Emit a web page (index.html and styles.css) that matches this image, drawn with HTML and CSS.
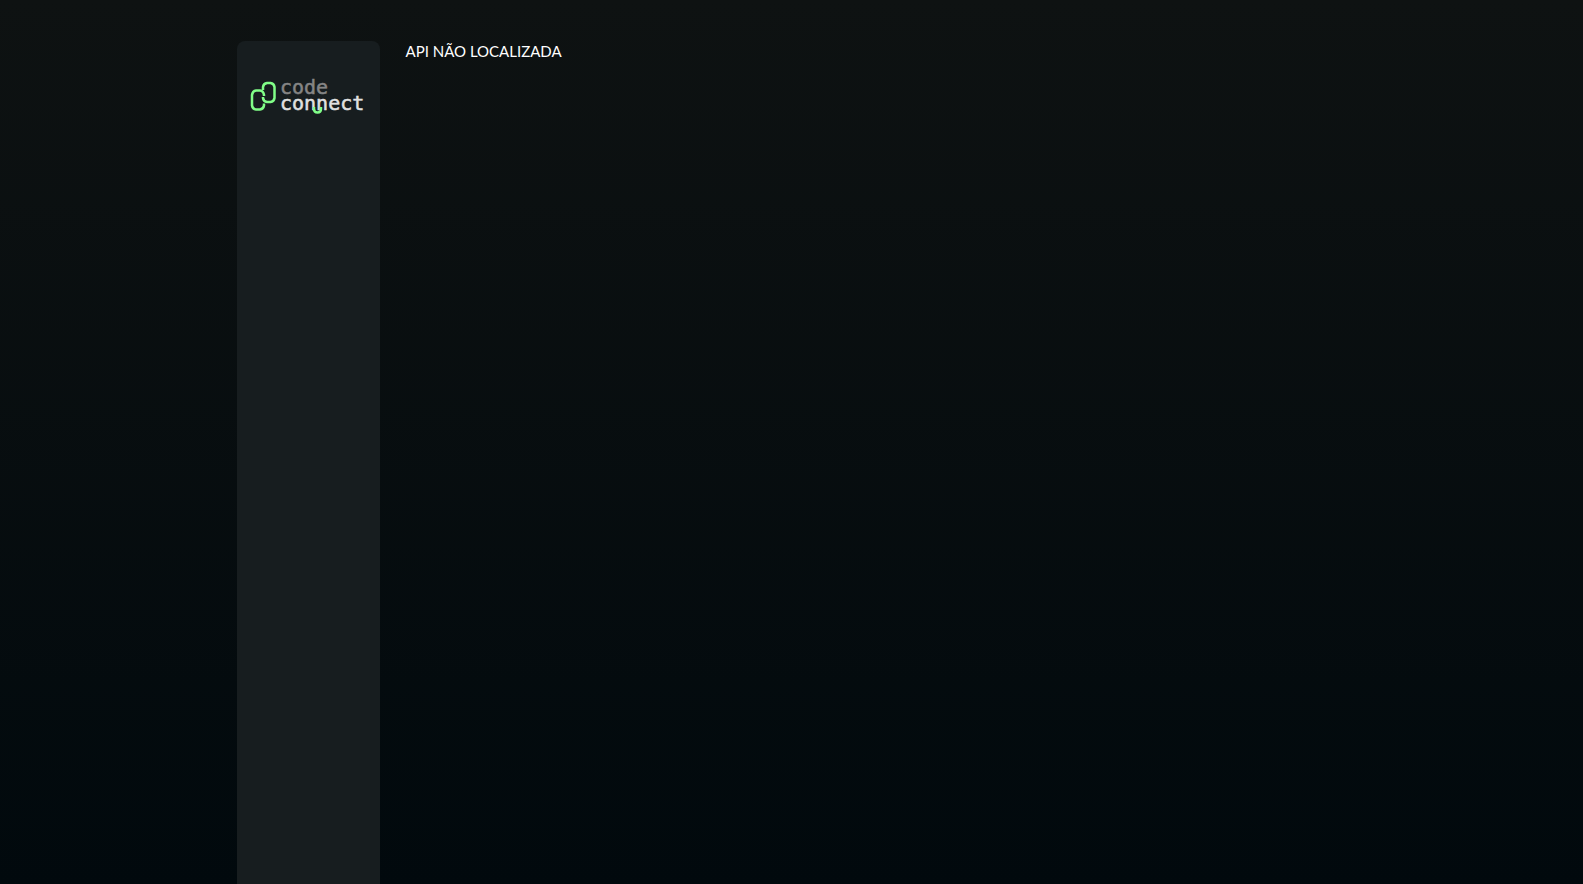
FILE: index.html
```html
<!DOCTYPE html>
<html lang="pt-BR">
<head>
<meta charset="utf-8">
<meta name="viewport" content="width=device-width, initial-scale=1">
<title>Code Connect</title>
<link rel="stylesheet" href="styles.css">
</head>
<body>
<div class="container">
  <aside class="sidebar">
    <svg class="logo" viewBox="0 0 117 40" role="img" aria-label="Code Connect">
      <g class="logo-mark">
        <path d="M14 19V18Q13.500 14 10 13.500H6Q2.500 14 2 18V28.500Q2.500 32 6 32.500H10Q13.500 32 14 28.500V26.500"/>
        <path d="M13 13V10Q13.500 6.500 17 6H20.500Q24 6.500 24.500 10V21Q24 24.500 20.500 25H17Q13.500 24.500 13 21V20"/>
      </g>
      <text class="logo-text logo-text-code" x="30" y="17">code</text>
      <text class="logo-text logo-text-connect" x="30" y="33">connect</text>
      <path class="logo-hook" d="M64 30V32Q64 35.500 67.500 35.500Q71 35.500 71 32V30"/>
    </svg>
  </aside>
  <main class="content">API NÃO LOCALIZADA</main>
</div>
</body>
</html>
```
FILE: styles.css
```css
* {
  box-sizing: border-box;
}

body {
  min-height: 100vh;
  margin: 0;
  background: linear-gradient(180deg, #0e1212 0%, #01090d 100%);
  color: #fff;
  font-family: Lato, sans-serif;
  font-size: 15px;
  line-height: 20px;
}

.container {
  display: flex;
  gap: 26px;
  max-width: 1110px;
  min-height: 100vh;
  margin: 0 auto;
  padding-top: 41px;
}

.sidebar {
  flex: 0 0 143px;
  padding: 36px 13px;
  border-radius: 8px 8px 0 0;
  background: #171d1f;
}

.logo {
  display: block;
  width: 100%;
  overflow: visible;
}

.logo-mark,
.logo-hook {
  fill: none;
  stroke: #81fe88;
  stroke-width: 2.5;
  stroke-linejoin: round;
}

.logo-text {
  font-family: "DejaVu Sans Mono", monospace;
  font-size: 20px;
  stroke-width: 0.5;
}

.logo-text-code {
  fill: #858585;
  stroke: #858585;
}

.logo-text-connect {
  fill: #e1e1e1;
  stroke: #e1e1e1;
}

.content {
  flex: 1;
}
```
